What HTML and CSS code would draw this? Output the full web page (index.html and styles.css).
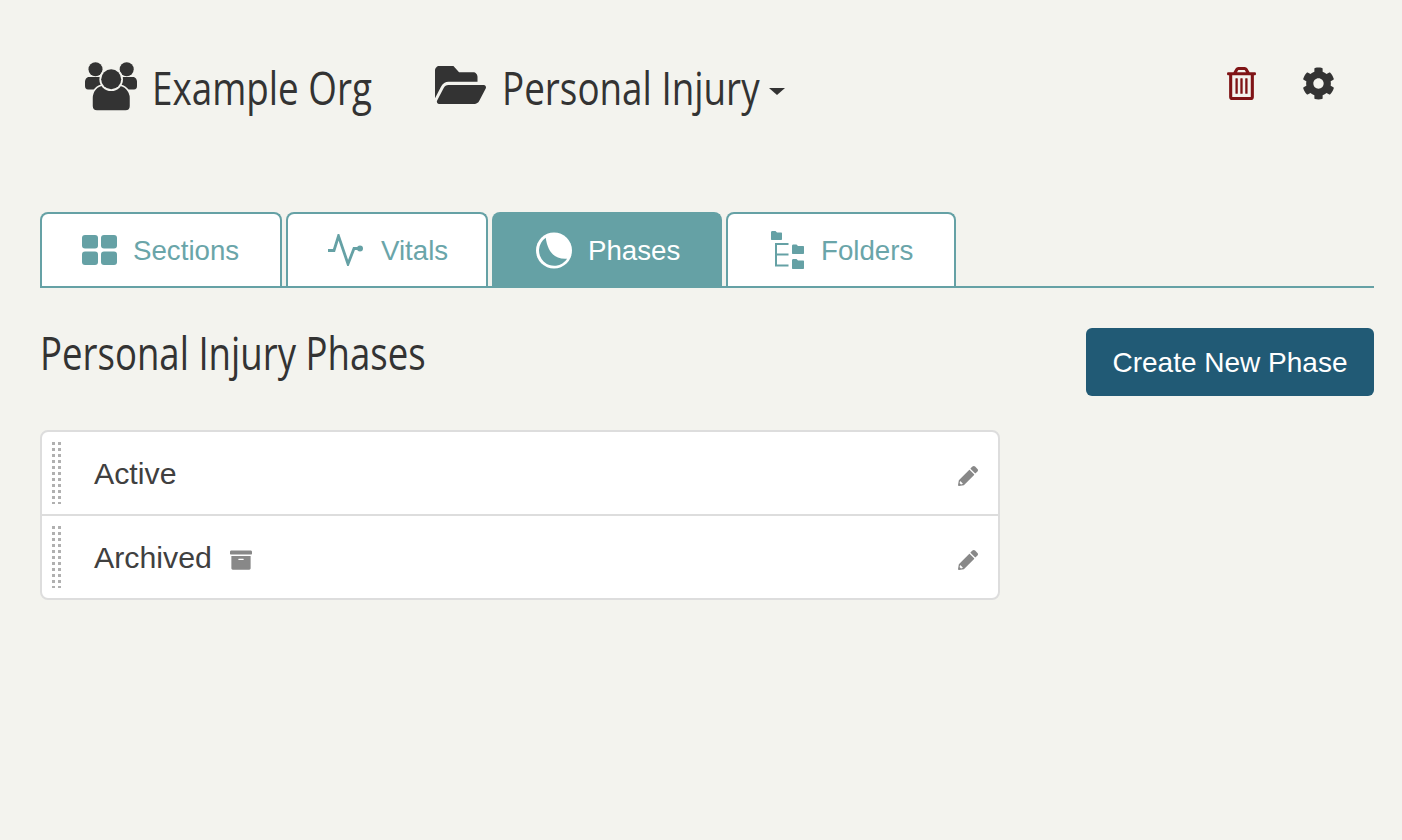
FILE: index.html
```html
<!DOCTYPE html>
<html lang="en">

<head>
    <meta charset="UTF-8">
    <meta name="viewport" content="width=device-width, initial-scale=1.0">
    <title>Personal Injury Phases</title>
    <link rel="stylesheet" href="styles.css">
</head>

<body>

    <div class="page">
        <header class="top-bar">
            <div class="org">
                <svg class="icon-users" viewBox="0 0 52 49">
                    <circle cx="10.500" cy="7.300" r="7" />
                    <circle cx="41.700" cy="7.300" r="7" />
                    <path d="M4 15h44c2.500 0 4 2.500 4 5v4c0 2-1 3.500-3 3.500H3c-2 0-3-1.500-3-3.500v-4c0-2.500 1.500-5 4-5z" />
                    <path class="gap" d="M7 36c0-7 5-13 12-13h14c7 0 12.500 6 12.500 13v8c0 3-2 5-5 5H12c-3 0-5-2-5-5z" />
                    <circle class="gap" cx="26.200" cy="17.300" r="11.800" />
                    <circle cx="26.200" cy="17.300" r="10" />
                </svg>
                <span class="narrow org-name">Example Org</span>
            </div>
            <div class="practice">
                <svg class="icon-folder" viewBox="0 0 576 384" preserveAspectRatio="none">
                    <path d="M572.700 228.100L500.300 352.200A64 64 0 0 1 445 384H45c-18.500 0-30-20.100-20.700-36.100l72.400-124.100A64 64 0 0 1 152 192h400c18.500 0 30 20.100 20.700 36.100zM152 160h328v-48c0-26.500-21.500-48-48-48H272L208 0H48C21.500 0 0 21.500 0 48v278l69.100-118.400C86.200 178.200 118 160 152 160z" />
                </svg>
                <span class="narrow practice-name">Personal Injury</span>
                <span class="caret"></span>
            </div>
            <div class="actions">
                <svg class="icon-trash" viewBox="0 0 448 512">
                    <path d="M432 80h-82.400l-34-56.700A48 48 0 0 0 274.400 0H173.600a48 48 0 0 0-41.200 23.300L98.400 80H16A16 16 0 0 0 0 96v16a16 16 0 0 0 16 16h16v336a48 48 0 0 0 48 48h288a48 48 0 0 0 48-48V128h16a16 16 0 0 0 16-16V96a16 16 0 0 0-16-16zM171.800 50.900A6 6 0 0 1 177 48h94a6 6 0 0 1 5.200 2.900L293.600 80H154.400zM368 464H80V128h288z" />
                    <rect x="130" y="176" width="36" height="240" rx="8" />
                    <rect x="206" y="176" width="36" height="240" rx="8" />
                    <rect x="282" y="176" width="36" height="240" rx="8" />
                </svg>
                <svg class="icon-cog" viewBox="0 0 512 512">
                    <path d="M487.400 315.700l-42.600-24.600c4.300-23.200 4.300-47 0-70.200l42.600-24.600c4.900-2.800 7.100-8.600 5.500-14-11.100-35.600-30-67.800-54.700-94.600-3.800-4.100-10-5.100-14.800-2.300L380.800 110c-17.900-15.400-38.500-27.300-60.800-35.100V25.800c0-5.600-3.900-10.500-9.400-11.700-36.700-8.200-74.300-7.800-109.200 0-5.500 1.200-9.400 6.100-9.400 11.700V75c-22.200 7.900-42.800 19.800-60.800 35.100L88.700 85.500c-4.900-2.800-11-1.900-14.800 2.300-24.700 26.700-43.600 58.900-54.700 94.600-1.700 5.400.6 11.200 5.500 14L67.300 221c-4.300 23.200-4.300 47 0 70.200l-42.600 24.600c-4.900 2.800-7.100 8.600-5.500 14 11.100 35.600 30 67.800 54.700 94.600 3.800 4.100 10 5.100 14.800 2.300l42.600-24.600c17.900 15.400 38.500 27.300 60.800 35.100v49.200c0 5.600 3.900 10.500 9.400 11.700 36.700 8.200 74.300 7.800 109.200 0 5.500-1.200 9.400-6.100 9.400-11.700v-49.200c22.200-7.900 42.800-19.800 60.800-35.100l42.600 24.600c4.900 2.800 11 1.900 14.800-2.300 24.700-26.700 43.600-58.900 54.700-94.600 1.500-5.500-.7-11.300-5.600-14.100zM256 336c-44.100 0-80-35.900-80-80s35.900-80 80-80 80 35.900 80 80-35.900 80-80 80z" />
                </svg>
            </div>
        </header>

        <nav class="tabs">
            <a class="tab tab-sections" href="#">
                <svg class="icon-sections" viewBox="0 0 35 30">
                    <rect width="16" height="13.500" rx="3" />
                    <rect x="19" width="16" height="13.500" rx="3" />
                    <rect y="16.500" width="16" height="13.500" rx="3" />
                    <rect x="19" y="16.500" width="16" height="13.500" rx="3" />
                </svg>
                <span>Sections</span>
            </a>
            <a class="tab tab-vitals" href="#">
                <svg class="icon-vitals" viewBox="0 0 35 32">
                    <path d="M0 16.500h6L10.500 2l9.500 28 6-15.500h6" />
                    <circle cx="32" cy="14.500" r="3" />
                </svg>
                <span>Vitals</span>
            </a>
            <a class="tab tab-phases active" href="#">
                <svg class="icon-phases" viewBox="0 0 37 37">
                    <circle cx="18.500" cy="18.500" r="18.500" />
                    <path class="moon" d="M10 5.500A15.700 15.700 0 1 0 32 27C19 28 12 20 10 5.500z" />
                </svg>
                <span>Phases</span>
            </a>
            <a class="tab tab-folders" href="#">
                <svg class="icon-folders" viewBox="0 0 33 38">
                    <path d="M0 1.500C0 .5.500 0 1.500 0h3l1.500 1.500h4c.7 0 1 .4 1 1v5.500c0 .7-.4 1-1 1H1c-.7 0-1-.4-1-1z" />
                    <path d="M21 15c0-1 .5-1.500 1.500-1.500h3l1.500 1.500h5c.7 0 1 .4 1 1v6c0 .7-.4 1-1 1H22c-.7 0-1-.4-1-1z" />
                    <path d="M21 29.500c0-1 .5-1.500 1.500-1.500h3l1.500 1.500h5c.7 0 1 .4 1 1v6.500c0 .7-.4 1-1 1H22c-.7 0-1-.4-1-1z" />
                    <path class="tree" d="M5 12v22.500h12.500M5 13h12.500M5 23.500h12.500" />
                </svg>
                <span>Folders</span>
            </a>
        </nav>

        <div class="title-row">
            <h1><span class="narrow page-title">Personal Injury Phases</span></h1>
            <button class="create-btn">Create New Phase</button>
        </div>

        <ul class="phase-list">
            <li class="phase">
                <span class="grip"></span>
                <span class="phase-name">Active</span>
                <svg class="icon-pencil" viewBox="0 0 512 512">
                    <path d="M497.900 142.100l-46.100 46.100c-4.700 4.700-12.300 4.700-17 0l-111-111c-4.700-4.700-4.700-12.300 0-17l46.100-46.100c18.700-18.700 49.100-18.700 67.900 0l60.100 60.100c18.800 18.700 18.800 49.100 0 67.900zM284.200 99.800L21.600 362.400.4 483.900c-2.900 16.400 11.400 30.600 27.800 27.800l121.500-21.300 262.600-262.600c4.700-4.700 4.700-12.300 0-17l-111-111c-4.800-4.700-12.400-4.700-17.100 0z" />
                    <path class="nib" d="M60 385l67 67-50 20-37-37z" />
                </svg>
            </li>
            <li class="phase">
                <span class="grip"></span>
                <span class="phase-name">Archived</span>
                <svg class="icon-archive" viewBox="0 0 512 448">
                    <path d="M32 416c0 17.700 14.300 32 32 32h384c17.700 0 32-14.300 32-32V128H32zm160-212c0-6.600 5.400-12 12-12h104c6.600 0 12 5.400 12 12v8c0 6.600-5.400 12-12 12H204c-6.600 0-12-5.400-12-12zM480 0H32C14.300 0 0 14.300 0 32v48c0 8.800 7.200 16 16 16h480c8.800 0 16-7.200 16-16V32c0-17.700-14.300-32-32-32z" />
                </svg>
                <svg class="icon-pencil" viewBox="0 0 512 512">
                    <path d="M497.900 142.100l-46.100 46.100c-4.700 4.700-12.300 4.700-17 0l-111-111c-4.700-4.700-4.700-12.300 0-17l46.100-46.100c18.700-18.700 49.100-18.700 67.900 0l60.100 60.100c18.800 18.700 18.800 49.100 0 67.900zM284.200 99.800L21.600 362.400.4 483.900c-2.900 16.400 11.400 30.600 27.800 27.800l121.500-21.300 262.600-262.600c4.700-4.700 4.700-12.300 0-17l-111-111c-4.800-4.700-12.400-4.700-17.100 0z" />
                    <path class="nib" d="M60 385l67 67-50 20-37-37z" />
                </svg>
            </li>
        </ul>
    </div>

</body>

</html>
```

FILE: styles.css
```css
body,
html {
    margin: 0;
    padding: 0;
    height: 100%;
    background-color: #f3f3ee;
    color: #333;
    font-family: "Liberation Sans", Arial, sans-serif;
}

.page {
    padding: 62px 28px 0 40px;
}

/* no condensed face is installed, so the heading font gets squeezed */
.narrow {
    display: inline-block;
    font-family: "Open Sans", sans-serif;
    white-space: nowrap;
    transform-origin: left center;
    transform: scaleX(0.8);
}

.org-name {
    width: 221px;
    margin-top: -2px;
}

.practice-name {
    width: 257px;
    margin-top: -2px;
}

.page-title {
    width: 385px;
    margin-top: -2px;
    transform: scaleX(0.795);
}

/* top row */
.top-bar {
    display: flex;
    align-items: center;
    height: 52px;
    padding-left: 45px;
    padding-right: 39px;
    font-size: 46px;
}

.org,
.practice {
    display: flex;
    align-items: center;
}

.org {
    margin-right: 62px;
}

.icon-users {
    width: 52px;
    height: 49px;
    margin-right: 15px;
    margin-top: -3px;
    fill: #333;
}

.icon-users .gap {
    stroke: #f3f3ee;
    stroke-width: 1.500;
}

.icon-users circle.gap {
    fill: #f3f3ee;
    stroke: none;
}

.icon-folder {
    width: 51px;
    height: 38px;
    margin-right: 16px;
    margin-top: -6px;
    fill: #333;
}

.caret {
    width: 0;
    height: 0;
    margin-left: 10px;
    margin-top: 6px;
    border-top: 7px solid #333;
    border-left: 8px solid transparent;
    border-right: 8px solid transparent;
}

.actions {
    display: flex;
    align-items: center;
    gap: 46px;
    margin-left: auto;
    margin-top: -10px;
}

.icon-trash {
    width: 29px;
    height: 33px;
    fill: #7f1416;
}

.icon-cog {
    width: 33px;
    height: 33px;
    fill: #333;
}

/* tabs */
.tabs {
    display: flex;
    gap: 4px;
    margin-top: 98px;
    border-bottom: 2px solid #65a1a5;
}

.tab {
    display: flex;
    align-items: center;
    gap: 16px;
    box-sizing: border-box;
    height: 74px;
    padding-left: 40px;
    background-color: #fff;
    border: 2px solid #65a1a5;
    border-bottom: none;
    border-radius: 8px 8px 0 0;
    color: #6aa5a9;
    font-size: 27.700px;
    text-decoration: none;
}

.tab span {
    margin-top: 1px;
}

.tab-sections {
    width: 242px;
}

.tab-vitals {
    width: 202px;
    gap: 18px;
}

.tab-phases {
    width: 230px;
    padding-left: 42px;
}

.tab-folders {
    width: 230px;
    padding-left: 43px;
    gap: 17px;
}

.tab.active {
    background-color: #65a1a5;
    color: #fff;
}

.tab svg {
    fill: #65a1a5;
}

.icon-sections {
    width: 35px;
    height: 30px;
}

.icon-vitals {
    width: 35px;
    height: 32px;
}

.tab .icon-vitals path {
    fill: none;
    stroke: #65a1a5;
    stroke-width: 2.800;
}

.tab .icon-phases {
    width: 36px;
    height: 37px;
    fill: #fff;
}

.icon-phases .moon {
    fill: #65a1a5;
}

.icon-folders {
    width: 33px;
    height: 38px;
}

.tab .icon-folders .tree {
    fill: none;
    stroke: #65a1a5;
    stroke-width: 2;
}

/* heading */
.title-row {
    display: flex;
    justify-content: space-between;
    align-items: flex-start;
    margin-top: 40px;
}

h1 {
    margin: 0;
    font-size: 46px;
    font-weight: normal;
    line-height: 52px;
}

.create-btn {
    width: 288px;
    height: 68px;
    padding-top: 2px;
    background-color: #215a75;
    border: none;
    border-radius: 6px;
    color: #fff;
    font-family: "Liberation Sans", Arial, sans-serif;
    font-size: 28px;
}

/* list of phases */
.phase-list {
    width: 956px;
    margin: 34px 0 0;
    padding: 0;
    list-style: none;
    background-color: #fff;
    border: 2px solid #ddd;
    border-radius: 8px;
}

.phase {
    display: flex;
    align-items: center;
    height: 82px;
    padding-left: 10px;
    padding-right: 20px;
    color: #404040;
    font-size: 30.300px;
}

.phase + .phase {
    border-top: 2px solid #ddd;
}

.phase-name {
    margin-top: 2px;
}

.grip {
    width: 9px;
    height: 62px;
    margin-right: 33px;
    background-image: conic-gradient(#b0b0b0 25%, transparent 0);
    background-position: 3px 0;
    background-size: 6px 6px;
}

.icon-archive {
    width: 22px;
    height: 20px;
    margin-left: 18px;
    margin-top: 6px;
    fill: #888;
}

.icon-pencil {
    width: 20px;
    height: 20px;
    margin-left: auto;
    margin-top: 6px;
    fill: #888;
}

.icon-pencil .nib {
    fill: #fff;
}
```
